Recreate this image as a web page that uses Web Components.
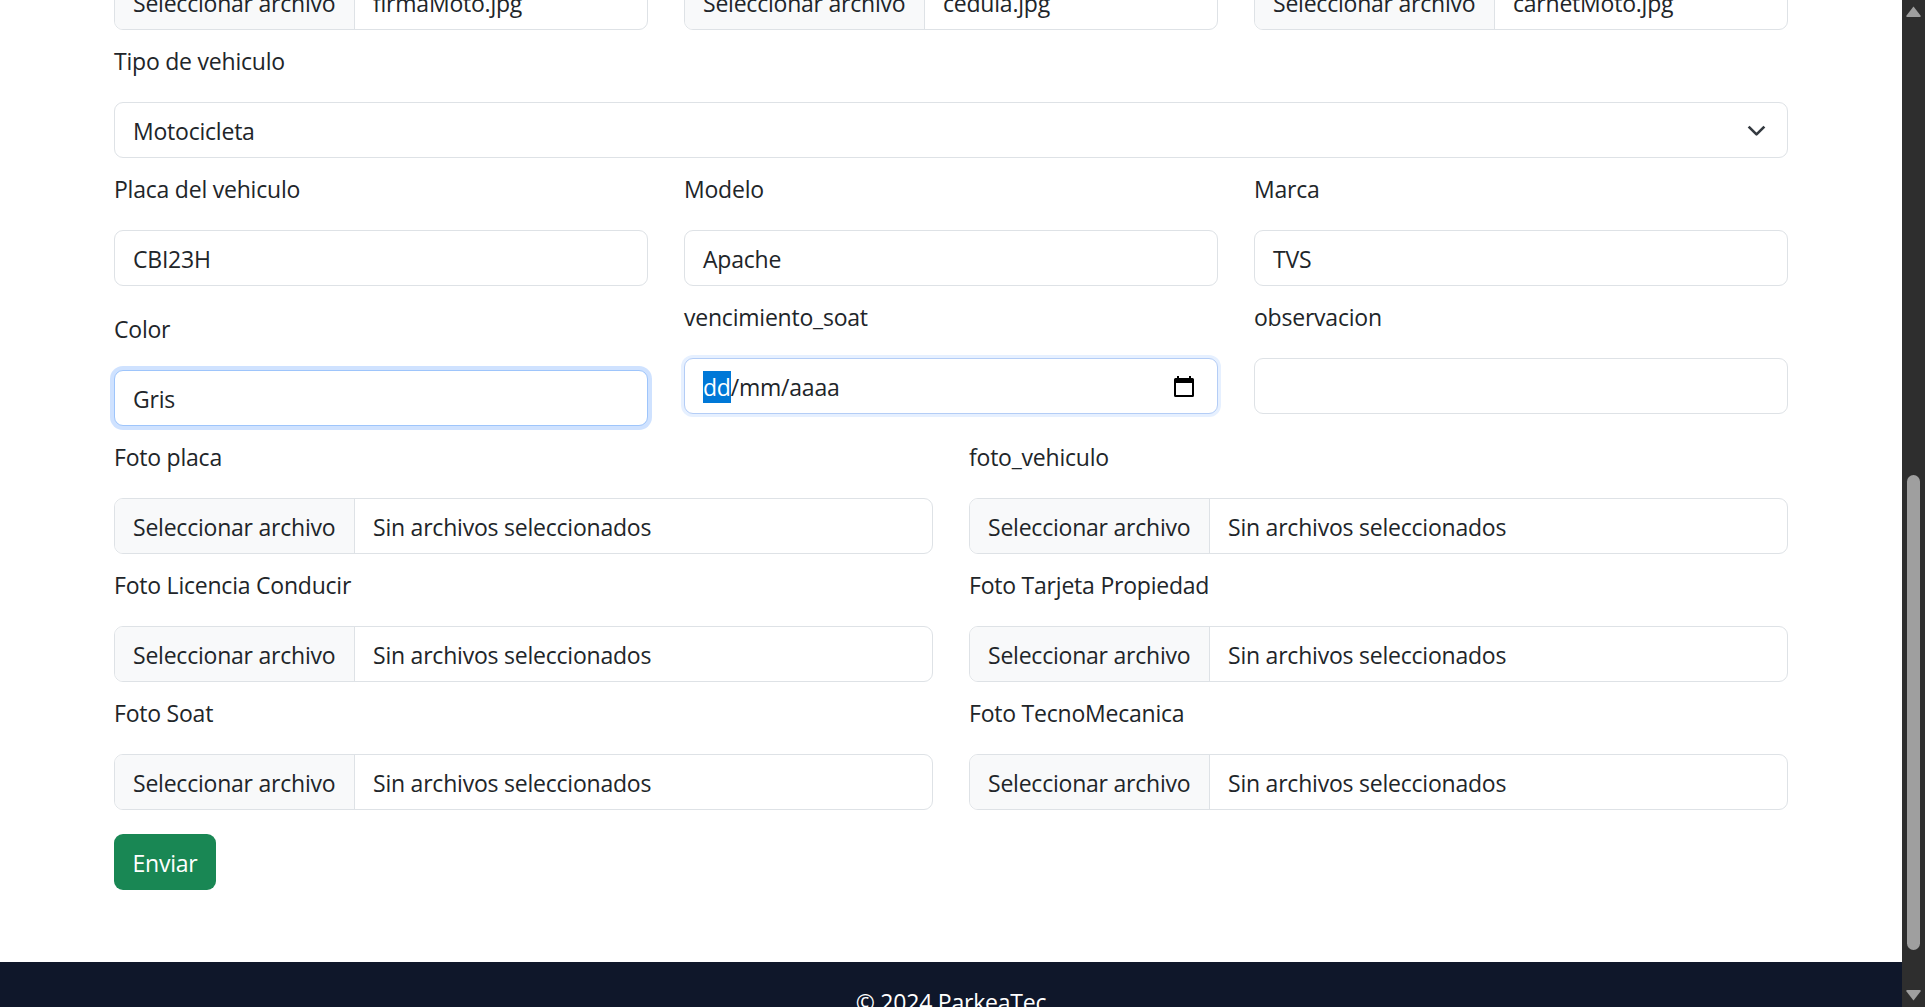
<!DOCTYPE html>
<html lang="es"><head><meta charset="utf-8"><title>ParkeaTec</title>
<style>
html,body{margin:0;height:100%;overflow:hidden;background:#fff}
body{font-family:"Open Sans","Liberation Sans",sans-serif;font-size:23px;color:#212529;letter-spacing:-.22px}
</style></head><body>
<template id="t-app"><style>
:host{display:flex;height:1007px;overflow:hidden}
.main{flex:1;min-width:0;overflow:hidden;display:flex;flex-direction:column}
.content{padding:0 114px;margin-top:-98px}
</style><div class="main"><div class="content"><slot></slot></div><slot name="footer"></slot></div><pk-scrollbar></pk-scrollbar></template>

<template id="t-row"><style>
:host{display:grid;column-gap:36px;align-items:start}
:host([cols="1"]){grid-template-columns:1fr}
:host([cols="2"]){grid-template-columns:repeat(2,1fr)}
:host([cols="3"]){grid-template-columns:repeat(3,1fr)}
</style><slot></slot></template>

<template id="t-field"><style>
:host{display:block;padding-top:14px;min-width:0}
:host([drop]){padding-top:26px}
label{display:block;line-height:35px;margin-bottom:23px;height:35px;white-space:nowrap}
</style><label></label><slot></slot></template>

<template id="t-input"><style>
:host{display:flex;align-items:center;box-sizing:border-box;height:56px;border:1px solid #dee2e6;border-radius:9px;background:#fff;padding:2px 18px 0;line-height:35px;white-space:nowrap}
:host([focus]){border-color:#9ec5fb;box-shadow:0 0 0 4px rgba(13,110,253,.2)}
</style><slot></slot></template>

<template id="t-file"><style>
:host{display:flex;box-sizing:border-box;height:56px;border:1px solid #dee2e6;border-radius:9px;background:#fff;overflow:hidden;line-height:35px;white-space:nowrap}
.b{display:flex;align-items:center;box-sizing:border-box;width:240px;flex:none;padding:2px 0 0 18px;background:#f8f9fa;border-right:1px solid #dee2e6}
.n{display:flex;align-items:center;padding:2px 0 0 18px}
</style><span class="b">Seleccionar archivo</span><span class="n"><slot></slot></span></template>

<template id="t-select"><style>
:host{display:flex;align-items:center;justify-content:space-between;box-sizing:border-box;height:56px;border:1px solid #dee2e6;border-radius:9px;background:#fff;padding:2px 20px 0 18px;line-height:35px}
svg{width:21px;height:21px;margin-top:-2px;display:block}
</style><slot></slot><svg viewBox="0 0 16 16"><path d="M2 5l6 6 6-6" fill="none" stroke="#343a40" stroke-width="2" stroke-linejoin="round"/></svg></template>

<template id="t-date"><style>
:host{display:flex;align-items:center;justify-content:space-between;box-sizing:border-box;height:56px;border:1px solid #b4cdf6;border-radius:9px;background:#fff;padding:0 23px 0 18px;box-shadow:0 0 0 3px rgba(13,110,253,.1);white-space:nowrap}
.t{display:flex;align-items:center;line-height:32px;height:32px;margin-top:2px}
.s{background:#0078d7;color:#fff;display:block}
svg{width:20px;height:21px;display:block;margin-top:1px}
</style><span class="t"><span class="s">dd</span><span>/mm/aaaa</span></span>
<svg viewBox="0 0 20 21"><path d="M0 3.500A1.500 1.500 0 0 1 1.500 2H3V0h2v2h10V0h2v2h1.500A1.500 1.500 0 0 1 20 3.500v16a1.500 1.500 0 0 1-1.500 1.500h-17A1.500 1.500 0 0 1 0 19.500z" fill="#000"/><rect x="2" y="7" width="16" height="12" fill="#fff"/></svg></template>

<template id="t-button"><style>
:host{display:inline-flex;align-items:center;box-sizing:border-box;height:56px;width:102px;justify-content:center;background:#198754;color:#fff;border-radius:9px;padding-top:2px;line-height:35px;margin-top:24px;margin-bottom:72px;vertical-align:top}
</style><slot></slot></template>

<template id="t-footer"><style>
:host{display:block;background:#0f172a;color:#fff;text-align:center;padding:23px 0 30px;line-height:35px;flex:none}
</style><slot></slot></template>

<template id="t-scrollbar"><style>
:host{display:flex;flex-direction:column;align-items:center;width:23px;flex:none;height:1007px;background:#2e2e2e}
svg{display:block;width:15px;height:11px;flex:none}
.up{margin-top:6px}
.track{flex:1;width:13px;padding-top:458px;box-sizing:border-box}
.thumb{height:475px;background:#9f9f9f;border-radius:7px}
.down{margin-bottom:6px}
</style><svg class="up" viewBox="0 0 15 11"><path d="M7.500 .5L14.500 9.500a1 1 0 0 1-.8 1.500H1.300a1 1 0 0 1-.8-1.500z" fill="#9f9f9f"/></svg><div class="track"><div class="thumb"></div></div><svg class="down" viewBox="0 0 15 11"><path d="M7.500 10.500L14.500 1.500A1 1 0 0 0 13.700 0H1.300a1 1 0 0 0-.8 1.500z" fill="#9f9f9f"/></svg></template>

<pk-app>
<pk-row cols="3">
<pk-field label="Firma"><pk-file>firmaMoto.jpg</pk-file></pk-field>
<pk-field label="Cédula"><pk-file>cedula.jpg</pk-file></pk-field>
<pk-field label="Carnet"><pk-file>carnetMoto.jpg</pk-file></pk-field>
</pk-row>
<pk-row cols="1"><pk-field label="Tipo de vehiculo"><pk-select>Motocicleta</pk-select></pk-field></pk-row>
<pk-row cols="3">
<pk-field label="Placa del vehiculo"><pk-input>CBI23H</pk-input></pk-field>
<pk-field label="Modelo"><pk-input>Apache</pk-input></pk-field>
<pk-field label="Marca"><pk-input>TVS</pk-input></pk-field>
</pk-row>
<pk-row cols="3">
<pk-field label="Color" drop><pk-input focus>Gris</pk-input></pk-field>
<pk-field label="vencimiento_soat"><pk-date></pk-date></pk-field>
<pk-field label="observacion"><pk-input></pk-input></pk-field>
</pk-row>
<pk-row cols="2">
<pk-field label="Foto placa"><pk-file>Sin archivos seleccionados</pk-file></pk-field>
<pk-field label="foto_vehiculo"><pk-file>Sin archivos seleccionados</pk-file></pk-field>
<pk-field label="Foto Licencia Conducir"><pk-file>Sin archivos seleccionados</pk-file></pk-field>
<pk-field label="Foto Tarjeta Propiedad"><pk-file>Sin archivos seleccionados</pk-file></pk-field>
<pk-field label="Foto Soat"><pk-file>Sin archivos seleccionados</pk-file></pk-field>
<pk-field label="Foto TecnoMecanica"><pk-file>Sin archivos seleccionados</pk-file></pk-field>
</pk-row>
<pk-button>Enviar</pk-button>
<pk-footer slot="footer">© 2024 ParkeaTec</pk-footer>
</pk-app>
<script>
const reg=(tag,tpl,init)=>customElements.define(tag,class extends HTMLElement{
  constructor(){super();const r=this.attachShadow({mode:'open'});r.appendChild(document.getElementById(tpl).content.cloneNode(true));}
  connectedCallback(){if(init)init(this);}
});
reg('pk-scrollbar','t-scrollbar');
reg('pk-app','t-app');
reg('pk-row','t-row');
reg('pk-field','t-field',el=>{el.shadowRoot.querySelector('label').textContent=el.getAttribute('label');});
reg('pk-input','t-input');
reg('pk-file','t-file');
reg('pk-select','t-select');
reg('pk-date','t-date');
reg('pk-button','t-button');
reg('pk-footer','t-footer');
</script>
</body></html>
